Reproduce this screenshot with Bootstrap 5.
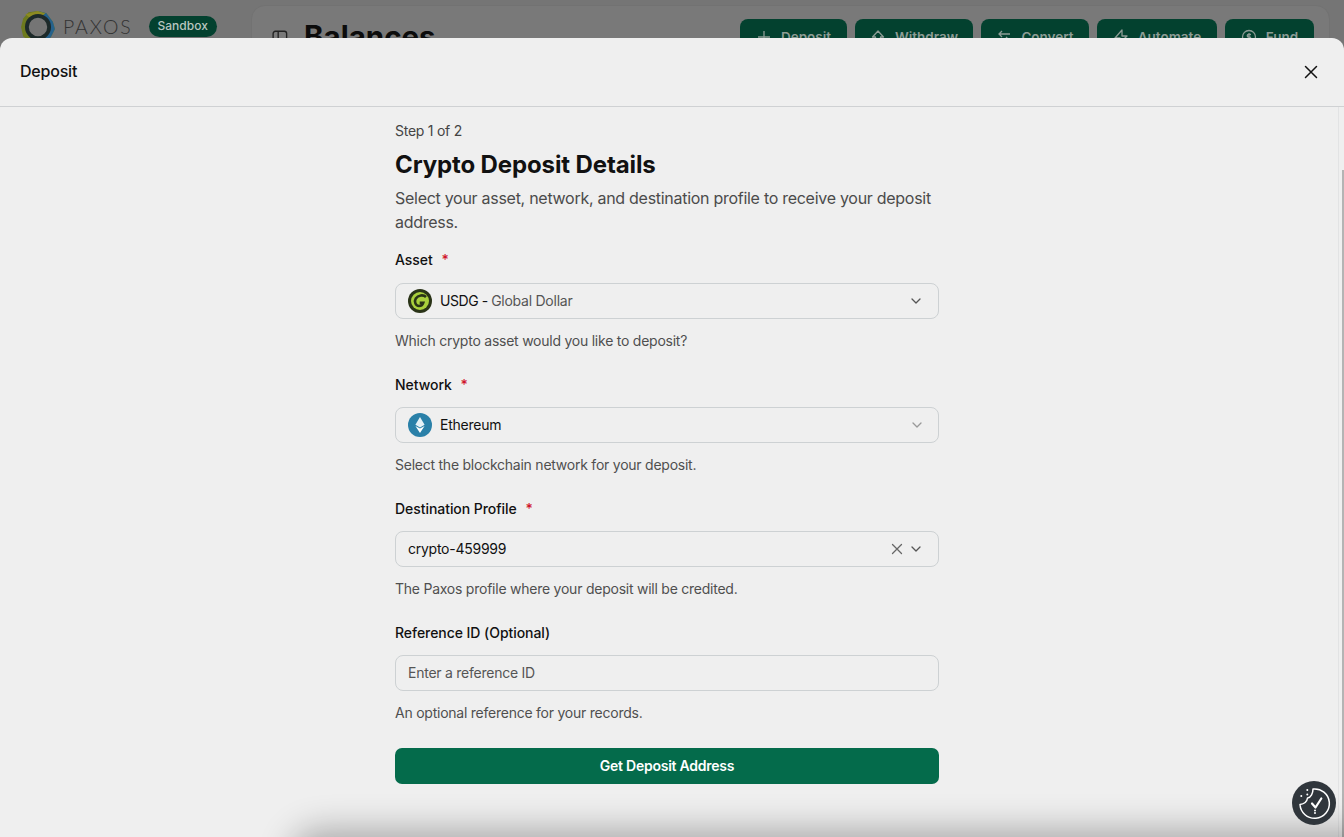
<!DOCTYPE html>
<html lang="en">
<head>
  <meta charset="UTF-8" />
  <meta name="viewport" content="width=device-width, initial-scale=1">
  <title>Deposit - Paxos</title>
  <link href="https://cdn.jsdelivr.net/npm/bootstrap@5.3.0/dist/css/bootstrap.min.css" rel="stylesheet">
  <style>
    html, body { height: 100%; overflow: hidden; }
    body { font-family: Inter, "Liberation Sans", sans-serif; background: #757575; color: #111; }
    .back-page { height: 837px; padding: 5px 14px 0 20px; }
    .brand-col { width: 231px; height: 44px; }
    .brand-name { font-family: Lato, "Liberation Sans", sans-serif; font-size: 19.5px; font-weight: 300; letter-spacing: 1.8px; color: #333; margin-left: 7px; }
    .env-pill { background: #03412f; color: #b9c6c0; font-size: 12px; font-weight: 500; border-radius: 11px; height: 21px; padding: 0 9px; margin-left: 16px; margin-top: -2px; }
    .back-card { background: #797979; border: 1px solid #727272; border-radius: 14px; height: 200px; padding: 13px 15px 0 20px; }
    .back-title { font-size: 29.5px; font-weight: 700; color: #0c0c0c; line-height: 36px; margin: 0 0 0 14px; position: relative; top: -1px; }
    .panel-icon { margin-top: 10px; }
    .back-btn { background: #03412f; color: #8d9c95; font-size: 13.5px; font-weight: 600; border: 0; border-radius: 8px; height: 36px; padding: 0; display: flex; align-items: center; justify-content: center; gap: 9px; }
    .sheet { position: absolute; top: 38px; left: 0; right: 0; bottom: 0; background: #efefef; border-radius: 12px 12px 0 0; overflow: hidden; }
    .sheet-head { height: 69px; padding: 0 25px 0 20px; border-bottom: 1px solid #cfd1d3; }
    .sheet-head h1 { font-size: 16px; font-weight: 500; margin: 0; color: #111; letter-spacing: -.2px; }
    .close-x { background: none; border: 0; padding: 0; width: 16px; height: 16px; line-height: 0; }
    .sheet-body { position: relative; height: 730px; padding-right: 4px; border-right: 1px solid #e2e3e4; margin-right: 5px; }
    .form-col { width: 544px; padding-top: 14px; }
    .step-text { font-size: 14px; line-height: 20px; color: #444; letter-spacing: -.25px; }
    .form-title { font-size: 24px; font-weight: 700; line-height: 34px; margin: 7px 0 4px; color: #111; letter-spacing: -.12px; }
    .form-desc { font-size: 16px; line-height: 24px; color: #4b4b4b; margin-bottom: 16px; letter-spacing: -.28px; }
    .field-label { font-size: 14px; font-weight: 500; line-height: 20px; margin-bottom: 12px; color: #111; display: block; letter-spacing: -.05px; }
    .field-label.first-label { margin-bottom: 13px; }
    .field-label .req { color: #d0142c; margin-left: 5px; }
    .field-box { height: 36px; border: 1px solid #cdd1d3; border-radius: 8px; padding: 0 16px 0 12px; font-size: 14px; background: #efefef; color: #111; letter-spacing: -.25px; }
    .field-box.short-end { padding-right: 15px; }
    .field-box > span { margin-bottom: 2px; }
    .field-input { width: 100%; outline: 0; padding-bottom: 2px; }
    .field-input::placeholder { color: #555; opacity: 1; }
    .field-help { font-size: 14px; line-height: 20px; color: #4f4f4f; margin: 12px 0 24px; letter-spacing: -.24px; }
    .asset-code { letter-spacing: -.45px; }
    .token-name { color: #555; letter-spacing: -.25px; }
    .clear-icon { margin-right: 6px; }
    .submit-btn { background: #046b4b; color: #fff; border: 0; border-radius: 7px; height: 36px; padding: 0 0 2px; font-size: 14px; font-weight: 600; width: 100%; margin-top: 1px; letter-spacing: -.25px; }
    .scroll-thumb { position: absolute; right: 0; top: 170px; width: 2px; height: 667px; background: #b4b4b4; }
    .low-shadow { position: absolute; left: 300px; right: -40px; top: 838px; height: 30px; box-shadow: 0 0 34px 8px rgba(0,0,0,.3); border-radius: 20px 0 0 0; }
    .cookie-btn { position: absolute; left: 1292px; top: 781px; width: 44px; height: 44px; border-radius: 50%; background: #30363c; }
  </style>
</head>
<body>
  <!-- Page behind the modal -->
  <div class="back-page d-flex">
    <div class="brand-col d-flex align-items-center flex-shrink-0">
      <svg width="36" height="36" viewBox="0 0 34 34">
        <path d="M3 9 8 3l9-1 8 2 6 8 2 7-4 8-9 3H9l-6-4-2-9z" fill="#6d7a1e"/>
        <path d="M17 2l8 2 6 8 2 7-4 8-9 3z" fill="#25618c"/>
        <path d="M5 5l12-3 7 2-5 4H9z" fill="#8c8a22"/>
        <circle cx="17" cy="17" r="10.500" fill="#757575" stroke="#1d2a2a" stroke-width="3.600"/>
      </svg>
      <span class="brand-name">PAXOS</span>
      <span class="env-pill d-inline-flex align-items-center">Sandbox</span>
    </div>
    <div class="back-card flex-grow-1 d-flex align-items-start">
      <svg class="panel-icon" width="18" height="18" viewBox="0 0 16 16" fill="none" stroke="#222" stroke-width="1.200"><rect x="1" y="2" width="12" height="12" rx="2"/><path d="M5.500 2v12"/></svg>
      <h2 class="back-title flex-grow-1">Balances</h2>
      <div class="d-flex gap-2">
        <button class="back-btn" style="width:107px"><svg width="16" height="16" viewBox="0 0 16 16" fill="none" stroke="#8d9c95" stroke-width="1.300"><path d="M8 2v12M2 8h12"/></svg>Deposit</button>
        <button class="back-btn" style="width:118px"><svg width="16" height="16" viewBox="0 0 16 16" fill="none" stroke="#8d9c95" stroke-width="1.300" stroke-linejoin="round"><path d="M8 2 2.500 8H5.500v5h5V8h3z"/></svg>Withdraw</button>
        <button class="back-btn" style="width:108px"><svg width="16" height="16" viewBox="0 0 16 16" fill="none" stroke="#8d9c95" stroke-width="1.300"><path d="M14 5H3M6 2 3 5l3 3M2 11h11M10 8l3 3-3 3"/></svg>Convert</button>
        <button class="back-btn" style="width:120px"><svg width="16" height="16" viewBox="0 0 16 16" fill="none" stroke="#8d9c95" stroke-width="1.300" stroke-linejoin="round"><path d="M9 1 2 9h5l-1 6 8-8H9z"/></svg>Automate</button>
        <button class="back-btn" style="width:89px"><svg width="16" height="16" viewBox="0 0 16 16" fill="none" stroke="#8d9c95" stroke-width="1.300"><circle cx="8" cy="8" r="6.500"/><path d="M10 5.500H7.500a1.200 1.200 0 0 0 0 2.500h1a1.200 1.200 0 0 1 0 2.500H6M8 4v8"/></svg>Fund</button>
      </div>
    </div>
  </div>

  <!-- Deposit modal -->
  <div class="sheet">
    <div class="sheet-head d-flex align-items-center justify-content-between">
      <h1>Deposit</h1>
      <button class="close-x" aria-label="Close">
        <svg width="16" height="16" viewBox="0 0 16 16" fill="none" stroke="#111" stroke-width="1.500" stroke-linecap="round"><path d="M2.500 2.500l11 11M13.500 2.500l-11 11"/></svg>
      </button>
    </div>
    <div class="sheet-body d-flex justify-content-center">
      <form class="form-col">
        <div class="step-text">Step 1 of 2</div>
        <h2 class="form-title">Crypto Deposit Details</h2>
        <p class="form-desc">Select your asset, network, and destination profile to receive your deposit address.</p>

        <label class="field-label first-label">Asset <span class="req">*</span></label>
        <div class="field-box d-flex align-items-center">
          <svg class="me-2 flex-shrink-0" width="24" height="24" viewBox="0 0 24 24">
            <circle cx="12" cy="12" r="12" fill="#2a3317"/>
            <circle cx="12" cy="12" r="9" fill="#a9cf3c"/>
            <path d="M18 8C15.500 5.500 10 6 7.800 9.500 6 12.500 7.500 17 11 17c2.500 0 3.800-1.500 4.300-3.300h-3.600" fill="none" stroke="#2a3317" stroke-width="2.600"/>
          </svg>
          <span class="asset-code flex-grow-1">USDG - <span class="token-name">Global Dollar</span></span>
          <svg width="12" height="12" viewBox="0 0 12 12" fill="none" stroke="#555" stroke-width="1.300" stroke-linecap="round" stroke-linejoin="round"><path d="M2 4l4 4 4-4"/></svg>
        </div>
        <p class="field-help">Which crypto asset would you like to deposit?</p>

        <label class="field-label">Network <span class="req">*</span></label>
        <div class="field-box short-end d-flex align-items-center">
          <svg class="me-2 flex-shrink-0" width="24" height="24" viewBox="0 0 24 24">
            <circle cx="12" cy="12" r="12" fill="#2a80a8"/>
            <path d="M12 4l-4.600 7.800L12 14.400l4.600-2.600z" fill="#e6f1f6"/>
            <path d="M12 15.500l-4.600-2.600L12 20l4.600-7.100z" fill="#fff"/>
          </svg>
          <span class="flex-grow-1">Ethereum</span>
          <svg width="12" height="12" viewBox="0 0 12 12" fill="none" stroke="#999" stroke-width="1.300" stroke-linecap="round" stroke-linejoin="round"><path d="M2 4l4 4 4-4"/></svg>
        </div>
        <p class="field-help">Select the blockchain network for your deposit.</p>

        <label class="field-label">Destination Profile <span class="req">*</span></label>
        <div class="field-box d-flex align-items-center">
          <span class="flex-grow-1">crypto-459999</span>
          <svg class="clear-icon" width="14" height="14" viewBox="0 0 14 14" fill="none" stroke="#666" stroke-width="1.300" stroke-linecap="round"><path d="M2.500 2.500l9 9M11.500 2.500l-9 9"/></svg>
          <svg width="12" height="12" viewBox="0 0 12 12" fill="none" stroke="#555" stroke-width="1.300" stroke-linecap="round" stroke-linejoin="round"><path d="M2 4l4 4 4-4"/></svg>
        </div>
        <p class="field-help">The Paxos profile where your deposit will be credited.</p>

        <label class="field-label">Reference ID (Optional)</label>
        <input class="field-box field-input d-block" type="text" placeholder="Enter a reference ID">
        <p class="field-help">An optional reference for your records.</p>

        <button type="button" class="submit-btn">Get Deposit Address</button>
      </form>
    </div>
  </div>
  <div class="scroll-thumb"></div>
  <div class="low-shadow"></div>

  <!-- Cookie consent launcher -->
  <div class="cookie-btn d-flex align-items-center justify-content-center">
    <svg width="44" height="44" viewBox="0 0 44 44" fill="none" stroke="#fff" stroke-width="1.500" stroke-linecap="round" stroke-linejoin="round">
      <path d="M21 8A14.700 14.700 0 1 1 8 23.500C12 23 15 20.500 15.500 17 19 16.500 21 12 21 8Z"/>
      <path d="M20 22.500l3.500 4L29.300 17.500" stroke-width="2.200"/>
      <path d="M23 29.500v.1M23 32v.1M15.300 9v.1M9.300 15v.1M15.300 13.500v.1" stroke-width="2"/>
    </svg>
  </div>

  <script src="https://cdn.jsdelivr.net/npm/bootstrap@5.3.0/dist/js/bootstrap.bundle.min.js"></script>
</body>
</html>
